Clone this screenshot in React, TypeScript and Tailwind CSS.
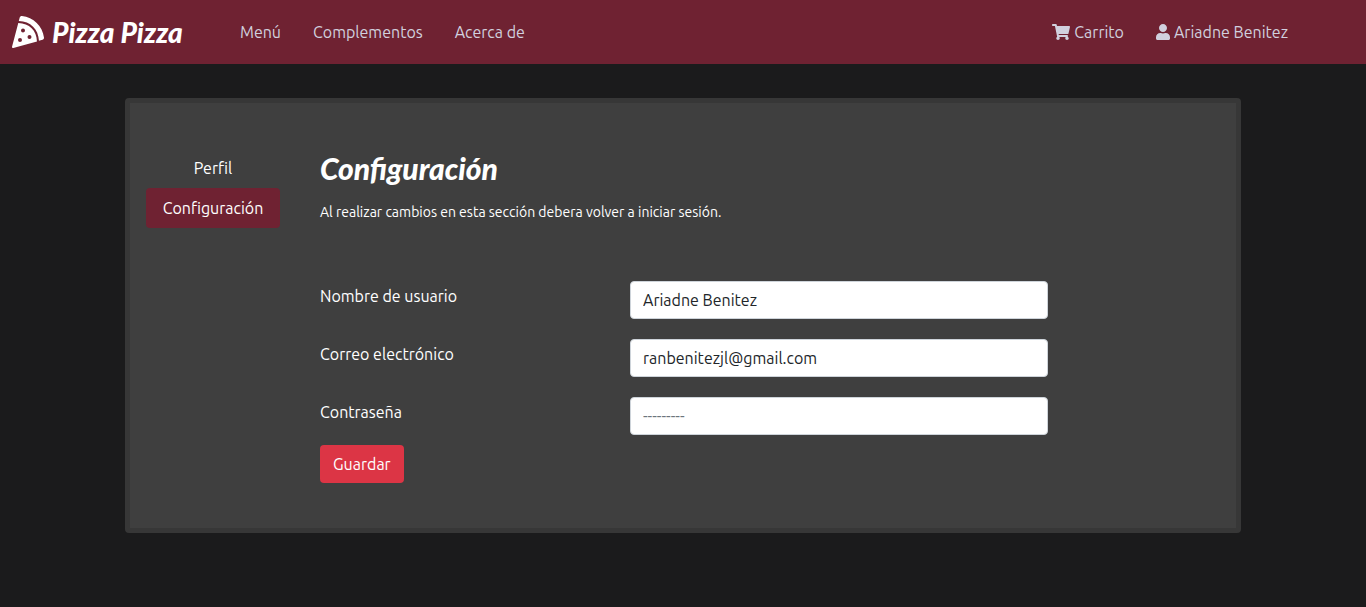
import { FaPizzaSlice, FaShoppingCart, FaUser } from "react-icons/fa";

const navLinks = ["Menú", "Complementos", "Acerca de"];

type FieldProps = {
  id: string;
  label: string;
  type: string;
  value?: string;
  placeholder?: string;
};

function Field({ id, label, type, value, placeholder }: FieldProps) {
  return (
    <div className="grid grid-cols-[310px_minmax(0,418px)] items-start">
      <label htmlFor={id} className="pt-[3px] leading-6">
        {label}
      </label>
      <input
        id={id}
        type={type}
        defaultValue={value}
        placeholder={placeholder}
        className="h-[38px] w-full rounded border border-[#ced4da] bg-white px-3 text-[#212529] placeholder:text-[#6c757d]"
      />
    </div>
  );
}

export default function App() {
  return (
    <div className="min-h-screen bg-[#1b1b1c] pb-10 font-['Ubuntu','Noto_Sans',sans-serif] text-base text-white">
      <header className="flex h-16 items-center bg-[#6f2232] pr-[78px] pl-3 text-[#d1d0de]">
        <a href="#" className="flex w-[228px] shrink-0 items-center gap-2 text-white">
          <FaPizzaSlice size={32} />
          <span className="font-['Lato',sans-serif] text-[28px] leading-8 font-black italic">Pizza Pizza</span>
        </a>
        <nav className="flex grow justify-between">
          <div className="flex gap-8">
            {navLinks.map((item) => (
              <a key={item} href="#">
                {item}
              </a>
            ))}
          </div>
          <div className="flex gap-8">
            <a href="#" className="flex items-center gap-1">
              <FaShoppingCart className="h-4 w-[18px]" />
              Carrito
            </a>
            <a href="#" className="flex items-center gap-1">
              <FaUser className="h-4 w-[14px]" />
              Ariadne Benitez
            </a>
          </div>
        </nav>
      </header>

      <main className="mx-auto mt-[34px] flex max-w-[1116px] gap-10 rounded border-[5px] border-[#373737] bg-[#3f3f3f] px-4 py-[45px]">
        <nav className="flex w-[134px] shrink-0 flex-col text-center">
          <a href="#" className="py-2 leading-6">
            Perfil
          </a>
          <a href="#" className="rounded bg-[#6f2232] py-2 leading-6">
            Configuración
          </a>
        </nav>
        <section className="grow">
          <h1 className="font-['Lato',sans-serif] text-3xl leading-10 font-black italic">Configuración</h1>
          <p className="mt-3 text-sm leading-6">
            Al realizar cambios en esta sección debera volver a iniciar sesión.
          </p>
          <form className="mt-[57px]">
            <div className="flex flex-col gap-5">
              <Field id="username" label="Nombre de usuario" type="text" value="Ariadne Benitez" />
              <Field id="email" label="Correo electrónico" type="email" value="ranbenitezjl@gmail.com" />
              <Field id="password" label="Contraseña" type="password" placeholder="---------" />
            </div>
            <button type="button" className="mt-[10px] h-[38px] rounded bg-[#dc3545] px-[13px]">
              Guardar
            </button>
          </form>
        </section>
      </main>
    </div>
  );
}
